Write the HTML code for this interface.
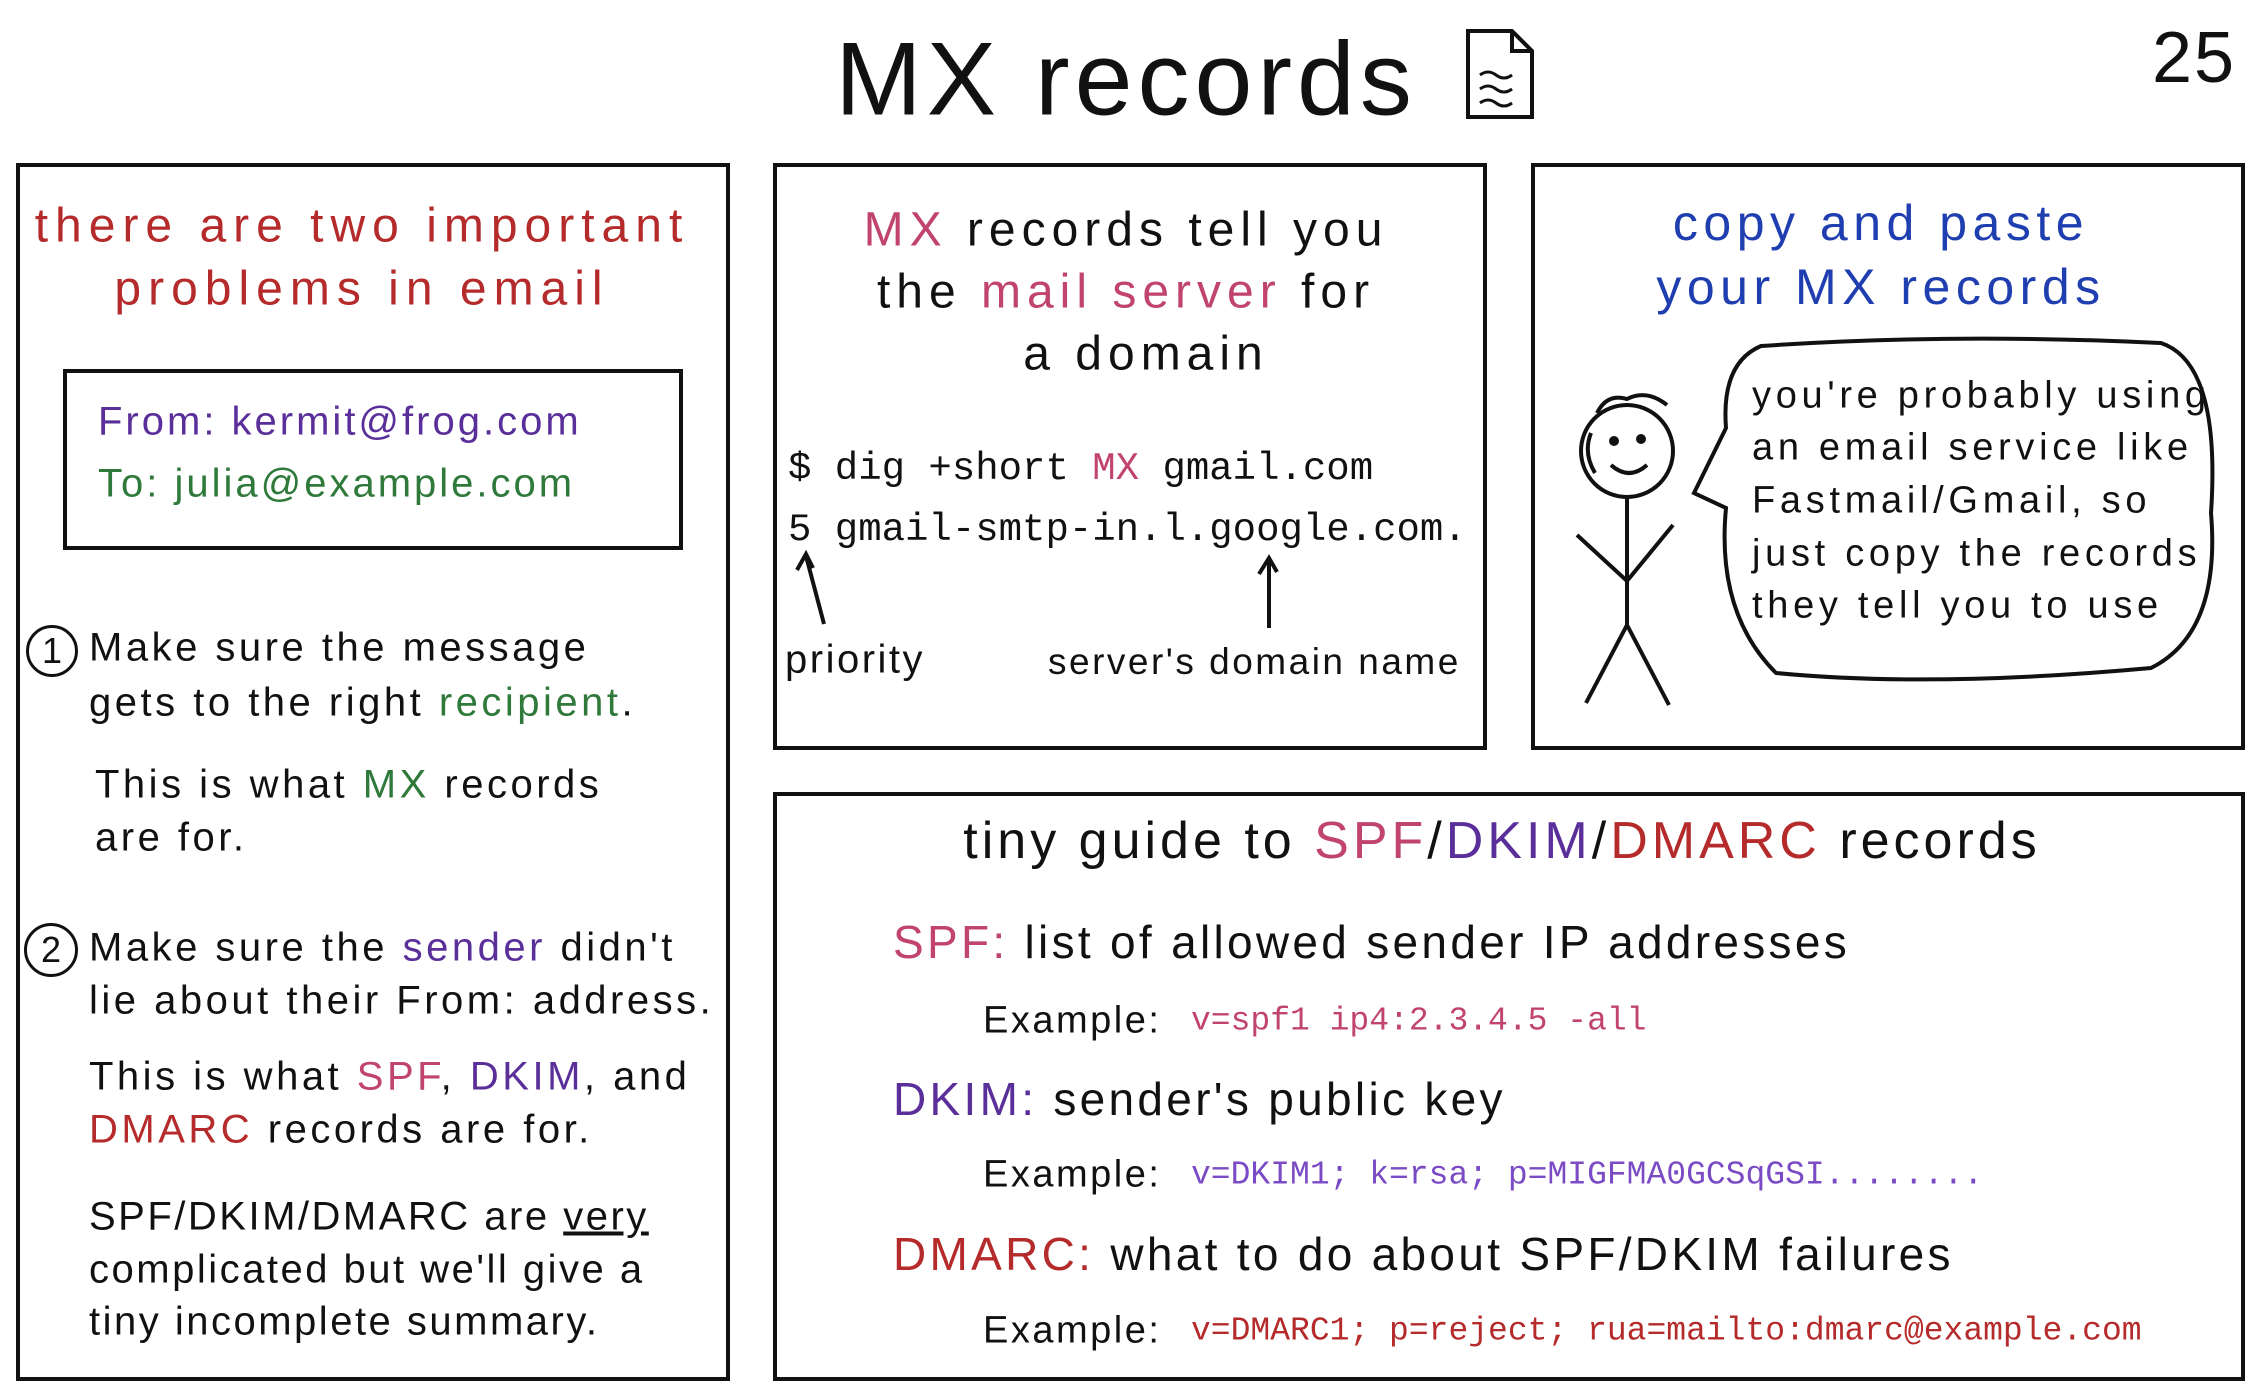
<!DOCTYPE html>
<html><head><meta charset="utf-8"><style>
html,body{margin:0;padding:0;background:#fff}
body{width:2258px;height:1398px;position:relative;overflow:hidden;font-family:"Liberation Sans","DejaVu Sans",sans-serif;color:#111}
.b{position:absolute;border:4px solid #111;box-sizing:border-box}
.t{position:absolute;white-space:nowrap;transform:translateY(-50%);font-size:40px;letter-spacing:3.5px}
.c{transform:translate(-50%,-50%);text-align:center}
.m{font-family:"Liberation Mono","DejaVu Sans Mono",monospace;letter-spacing:0}
.r{color:#b52a2a}.p{color:#c0446c}.g{color:#2f7a3a}.v{color:#5a2f9a}.bl{color:#1f3eb0}.vl{color:#7a4bc4}
.circ{position:absolute;border:3px solid #111;border-radius:50%;font-size:36px;text-align:center;box-sizing:border-box;letter-spacing:0}
.h4{font-size:46px;letter-spacing:3.3px}
.bub{font-size:38px;letter-spacing:4.7px}
</style></head><body>
<div class="t c" style="left:1126px;top:80px;font-size:104px;letter-spacing:5px">MX records</div>
<svg style="position:absolute;left:1460px;top:25px" width="80" height="100" viewBox="0 0 80 100"><path d="M8 6 L52 6 L72 26 L72 92 L8 92 Z M52 6 L52 26 L72 26" fill="none" stroke="#111" stroke-width="4"/><path d="M20 50 q8-6 16 0 t16 0 M20 64 q8-6 16 0 t16 0 M20 78 q8-6 16 0 t16 0" fill="none" stroke="#111" stroke-width="3"/></svg>
<div class="t" style="left:2152px;top:58px;font-size:72px;letter-spacing:2px">25</div>

<div class="b" style="left:16px;top:163px;width:714px;height:1218px"></div>
<div class="b" style="left:773px;top:163px;width:714px;height:587px"></div>
<div class="b" style="left:1531px;top:163px;width:714px;height:587px"></div>
<div class="b" style="left:773px;top:792px;width:1472px;height:589px"></div>

<div class="t c r" style="left:362px;top:226px;font-size:48px;letter-spacing:7px">there are two important</div>
<div class="t c r" style="left:362px;top:289px;font-size:48px;letter-spacing:7px">problems in email</div>
<div class="b" style="left:63px;top:369px;width:620px;height:181px"></div>
<div class="t v" style="left:98px;top:422px;letter-spacing:3px">From: kermit@frog.com</div>
<div class="t g" style="left:98px;top:484px;letter-spacing:3px">To: julia@example.com</div>

<div class="circ" style="left:26px;top:625px;width:52px;height:52px;line-height:46px">1</div>
<div class="t" style="left:89px;top:648px">Make sure the message</div>
<div class="t" style="left:89px;top:703px">gets to the right <span class="g">recipient</span>.</div>
<div class="t" style="left:95px;top:785px">This is what <span class="g">MX</span> records</div>
<div class="t" style="left:95px;top:838px">are for.</div>
<div class="circ" style="left:24px;top:923px;width:54px;height:54px;line-height:48px">2</div>
<div class="t" style="left:89px;top:948px">Make sure the <span class="v">sender</span> didn't</div>
<div class="t" style="left:89px;top:1001px">lie about their From: address.</div>
<div class="t" style="left:89px;top:1077px">This is what <span class="p">SPF</span>, <span class="v">DKIM</span>, and</div>
<div class="t" style="left:89px;top:1130px"><span class="r">DMARC</span> records are for.</div>
<div class="t" style="left:89px;top:1217px;letter-spacing:2.5px">SPF/DKIM/DMARC are <u>very</u></div>
<div class="t" style="left:89px;top:1270px;letter-spacing:2.5px">complicated but we'll give a</div>
<div class="t" style="left:89px;top:1322px;letter-spacing:2.5px">tiny incomplete summary.</div>

<div class="t c" style="left:1126px;top:230px;font-size:48px;letter-spacing:6px"><span class="p">MX</span> records tell you</div>
<div class="t c" style="left:1126px;top:292px;font-size:48px;letter-spacing:6px">the <span class="p">mail server</span> for</div>
<div class="t c" style="left:1146px;top:354px;font-size:48px;letter-spacing:6px">a domain</div>
<div class="t m" style="left:788px;top:469px;font-size:39px">$ dig +short <span class="p">MX</span> gmail.com</div>
<div class="t m" style="left:788px;top:530px;font-size:39px">5 gmail-smtp-in.l.google.com.</div>
<svg style="position:absolute;left:773px;top:540px" width="714" height="100"><path d="M51 84 L33 16 M24 30 L33 14 L40 28 M496 88 L496 22 M486 34 L496 18 L504 32" fill="none" stroke="#111" stroke-width="4"/></svg>
<div class="t" style="left:785px;top:660px;letter-spacing:2.5px">priority</div>
<div class="t" style="left:1048px;top:662px;font-size:37px;letter-spacing:2.5px">server's domain name</div>

<div class="t c bl" style="left:1881px;top:223px;font-size:50px;letter-spacing:5.5px">copy and paste</div>
<div class="t c bl" style="left:1881px;top:287px;font-size:50px;letter-spacing:5.5px">your MX records</div>
<svg style="position:absolute;left:1531px;top:163px" width="714" height="587">
<g fill="none" stroke="#111" stroke-width="4">
<circle cx="96" cy="288" r="46"/>
<path d="M66 250 q10-20 30-14 q20-10 40 6 M60 270 q-8 20 4 40"/>
<circle cx="83" cy="278" r="3" fill="#111"/><circle cx="110" cy="276" r="3" fill="#111"/>
<path d="M80 302 q18 16 36 0"/>
<path d="M96 334 L96 462 M46 372 L96 418 L142 362 M96 462 L55 540 M96 462 L138 542"/>
<path d="M230 183 Q190 200 195 265 L163 330 L195 345 Q185 450 245 510 Q400 525 620 505 Q690 470 680 350 Q690 200 630 180 Q420 170 230 183 Z"/>
</g></svg>
<div class="t bub" style="left:1752px;top:396px">you're probably using</div>
<div class="t bub" style="left:1752px;top:448px">an email service like</div>
<div class="t bub" style="left:1752px;top:501px">Fastmail/Gmail, so</div>
<div class="t bub" style="left:1752px;top:554px">just copy the records</div>
<div class="t bub" style="left:1752px;top:606px">they tell you to use</div>

<div class="t c" style="left:1502px;top:841px;font-size:52px;letter-spacing:4px">tiny guide to <span class="p">SPF</span>/<span class="v">DKIM</span>/<span class="r">DMARC</span> records</div>
<div class="t h4" style="left:893px;top:942px"><span class="p">SPF:</span> list of allowed sender IP addresses</div>
<div class="t" style="left:983px;top:1021px;font-size:38px;letter-spacing:2.5px">Example:</div>
<div class="t m p" style="left:1191px;top:1021px;font-size:33px">v=spf1 ip4:2.3.4.5 -all</div>
<div class="t h4" style="left:893px;top:1099px"><span class="v">DKIM:</span> sender's public key</div>
<div class="t" style="left:983px;top:1175px;font-size:38px;letter-spacing:2.5px">Example:</div>
<div class="t m vl" style="left:1191px;top:1175px;font-size:33px">v=DKIM1; k=rsa; p=MIGFMA0GCSqGSI........</div>
<div class="t h4" style="left:893px;top:1254px"><span class="r">DMARC:</span> what to do about SPF/DKIM failures</div>
<div class="t" style="left:983px;top:1331px;font-size:38px;letter-spacing:2.5px">Example:</div>
<div class="t m r" style="left:1191px;top:1331px;font-size:33px">v=DMARC1; p=reject; rua=mailto:dmarc@example.com</div>
</body></html>
